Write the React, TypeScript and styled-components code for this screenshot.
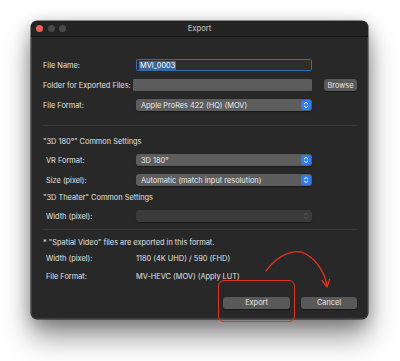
import React from "react";
import styled, { createGlobalStyle } from "styled-components";

const Global = createGlobalStyle`
  html, body { margin: 0; padding: 0; background: #ffffff; }
  body { font-family: Inter, "Noto Sans", "Liberation Sans", sans-serif; }
`;

const Page = styled.div`
  position: relative;
  width: 400px;
  height: 361px;
  overflow: hidden;
  background: #ffffff;
  padding: 21px 0 0 31px;
  box-sizing: border-box;
`;

const Window = styled.div`
  width: 337px;
  height: 298px;
  background: #282828;
  border-radius: 6px;
  overflow: hidden;
  display: flex;
  flex-direction: column;
  box-shadow: 0 18px 28px rgba(0, 0, 0, 0.42), 0 3px 16px rgba(0, 0, 0, 0.28),
    0 0 0 0.5px rgba(0, 0, 0, 0.8), inset 0 0 0 1px rgba(255, 255, 255, 0.1);
  color: #e0e0e0;
  font-size: 7.4px;
`;

const TitleBar = styled.div`
  height: 15px;
  flex: none;
  background: #232323;
  border-bottom: 1px solid #141414;
  display: flex;
  align-items: center;
  position: relative;
  padding-left: 5px;
  gap: 4.5px;
`;

const Light = styled.span<{ $c: string }>`
  width: 7px;
  height: 7px;
  border-radius: 50%;
  background: ${(p) => p.$c};
  flex: none;
`;

const Title = styled.div`
  position: absolute;
  left: 0;
  right: 0;
  text-align: center;
  font-size: 7.6px;
  color: #b8b8b8;
  font-weight: 500;
`;

const Content = styled.div`
  padding: 22px 11px 11px 12px;
  display: flex;
  flex-direction: column;
`;

const Row = styled.div<{ $mt?: number }>`
  display: grid;
  grid-template-columns: 93px 176px 45px;
  align-items: center;
  height: 12px;
  margin-top: ${(p) => p.$mt ?? 0}px;
`;

const Label = styled.div<{ $indent?: number }>`
  padding-left: ${(p) => p.$indent ?? 0}px;
  white-space: nowrap;
  color: #e0e0e0;
`;

const TextField = styled.div`
  height: 12px;
  box-sizing: border-box;
  background: #2e2e2e;
  border: 1.5px solid #2f6fb1;
  border-radius: 1.5px;
  display: flex;
  align-items: center;
  padding-left: 2px;
`;

const Selected = styled.span`
  background: #3c6494;
  color: #ffffff;
  padding: 0 1px;
  line-height: 9px;
`;

const GrayField = styled.div`
  height: 12px;
  margin-left: -3px;
  background: #5c5c5c;
  border-radius: 1px;
`;

const Popup = styled.div<{ $disabled?: boolean }>`
  height: 12px;
  box-sizing: border-box;
  background: ${(p) => (p.$disabled ? "#3a3a3a" : "#5d5d5d")};
  border-radius: 3px;
  display: flex;
  align-items: center;
  justify-content: space-between;
  padding: 0 1px 0 5px;
  color: #e8e8e8;
  box-shadow: 0 0.5px 1px rgba(0, 0, 0, 0.4);
  white-space: nowrap;
`;

const SmallButton = styled.div<{ $w: number }>`
  width: ${(p) => p.$w}px;
  height: 11.5px;
  box-sizing: border-box;
  background: #595959;
  border-radius: 3px;
  display: flex;
  align-items: center;
  justify-content: center;
  color: #e6e6e6;
  box-shadow: 0 0.5px 1px rgba(0, 0, 0, 0.4);
`;

const BrowseWrap = styled.div`
  display: flex;
  justify-content: flex-end;
`;

const Separator = styled.div<{ $mt: number }>`
  height: 1px;
  background: #383838;
  margin-top: ${(p) => p.$mt}px;
`;

const Heading = styled.div<{ $mt: number }>`
  height: 12px;
  line-height: 12px;
  margin-top: ${(p) => p.$mt}px;
  color: #e0e0e0;
  white-space: nowrap;
`;

const InfoRow = styled.div<{ $mt: number }>`
  display: grid;
  grid-template-columns: 93px 1fr;
  height: 12px;
  line-height: 12px;
  margin-top: ${(p) => p.$mt}px;
  white-space: nowrap;
`;

const Footer = styled.div`
  display: flex;
  justify-content: flex-end;
  gap: 11px;
  margin-top: 14px;
`;

const Annotation = styled.div`
  position: absolute;
  left: 218px;
  top: 280px;
  width: 77px;
  height: 42px;
  box-sizing: border-box;
  border: 1.4px solid #e5321f;
  border-radius: 6px;
`;

const ArrowSvg = styled.svg`
  position: absolute;
  left: 0;
  top: 0;
  pointer-events: none;
`;

const Stepper: React.FC<{ disabled?: boolean }> = ({ disabled }) => (
  <svg width="10" height="10" viewBox="0 0 10 10">
    {!disabled && <rect x="0" y="0" width="10" height="10" rx="2.2" fill="#2f7cf0" />}
    <path
      d="M3.2 4 L5 2.3 L6.8 4 M3.2 6 L5 7.7 L6.8 6"
      fill="none"
      stroke={disabled ? "#5a5a5a" : "#ffffff"}
      strokeWidth="1"
      strokeLinecap="round"
      strokeLinejoin="round"
    />
  </svg>
);

export default function App() {
  return (
    <Page>
      <Global />
      <Window>
        <TitleBar>
          <Light $c="#ed5f57" />
          <Light $c="#4a4a4a" />
          <Light $c="#4a4a4a" />
          <Title>Export</Title>
        </TitleBar>
        <Content>
          <Row>
            <Label>File Name:</Label>
            <TextField>
              <Selected>MVI_0003</Selected>
            </TextField>
          </Row>
          <Row $mt={8}>
            <Label>Folder for Exported Files:</Label>
            <GrayField />
            <BrowseWrap>
              <SmallButton $w={33}>Browse</SmallButton>
            </BrowseWrap>
          </Row>
          <Row $mt={8}>
            <Label>File Format:</Label>
            <Popup>
              Apple ProRes 422 (HQ) (MOV)
              <Stepper />
            </Popup>
          </Row>
          <Separator $mt={14} />
          <Heading $mt={10}>"3D 180°" Common Settings</Heading>
          <Row $mt={6}>
            <Label $indent={3}>VR Format:</Label>
            <Popup>
              3D 180°
              <Stepper />
            </Popup>
          </Row>
          <Row $mt={8}>
            <Label $indent={3}>Size (pixel):</Label>
            <Popup>
              Automatic (match input resolution)
              <Stepper />
            </Popup>
          </Row>
          <Heading $mt={6}>"3D Theater" Common Settings</Heading>
          <Row $mt={6}>
            <Label $indent={3}>Width (pixel):</Label>
            <Popup $disabled>
              <span />
              <Stepper disabled />
            </Popup>
          </Row>
          <Separator $mt={7} />
          <Heading $mt={7}>* "Spatial Video" files are exported in this format.</Heading>
          <InfoRow $mt={4}>
            <Label $indent={3}>Width (pixel):</Label>
            <span>1180 (4K UHD) / 590 (FHD)</span>
          </InfoRow>
          <InfoRow $mt={6}>
            <Label $indent={3}>File Format:</Label>
            <span>MV-HEVC (MOV) (Apply LUT)</span>
          </InfoRow>
          <Footer>
            <SmallButton $w={67}>Export</SmallButton>
            <SmallButton $w={56}>Cancel</SmallButton>
          </Footer>
        </Content>
      </Window>
      <Annotation />
      <ArrowSvg width="400" height="361" viewBox="0 0 400 361">
        <path
          d="M266 271 C 278 254, 296 248, 306 254 C 318 261, 325 274, 327 286"
          fill="none"
          stroke="#e5321f"
          strokeWidth="1.3"
          strokeLinecap="round"
        />
        <path
          d="M322 280.5 L327 287 L329.5 279.5"
          fill="none"
          stroke="#e5321f"
          strokeWidth="1.3"
          strokeLinecap="round"
          strokeLinejoin="round"
        />
      </ArrowSvg>
    </Page>
  );
}
